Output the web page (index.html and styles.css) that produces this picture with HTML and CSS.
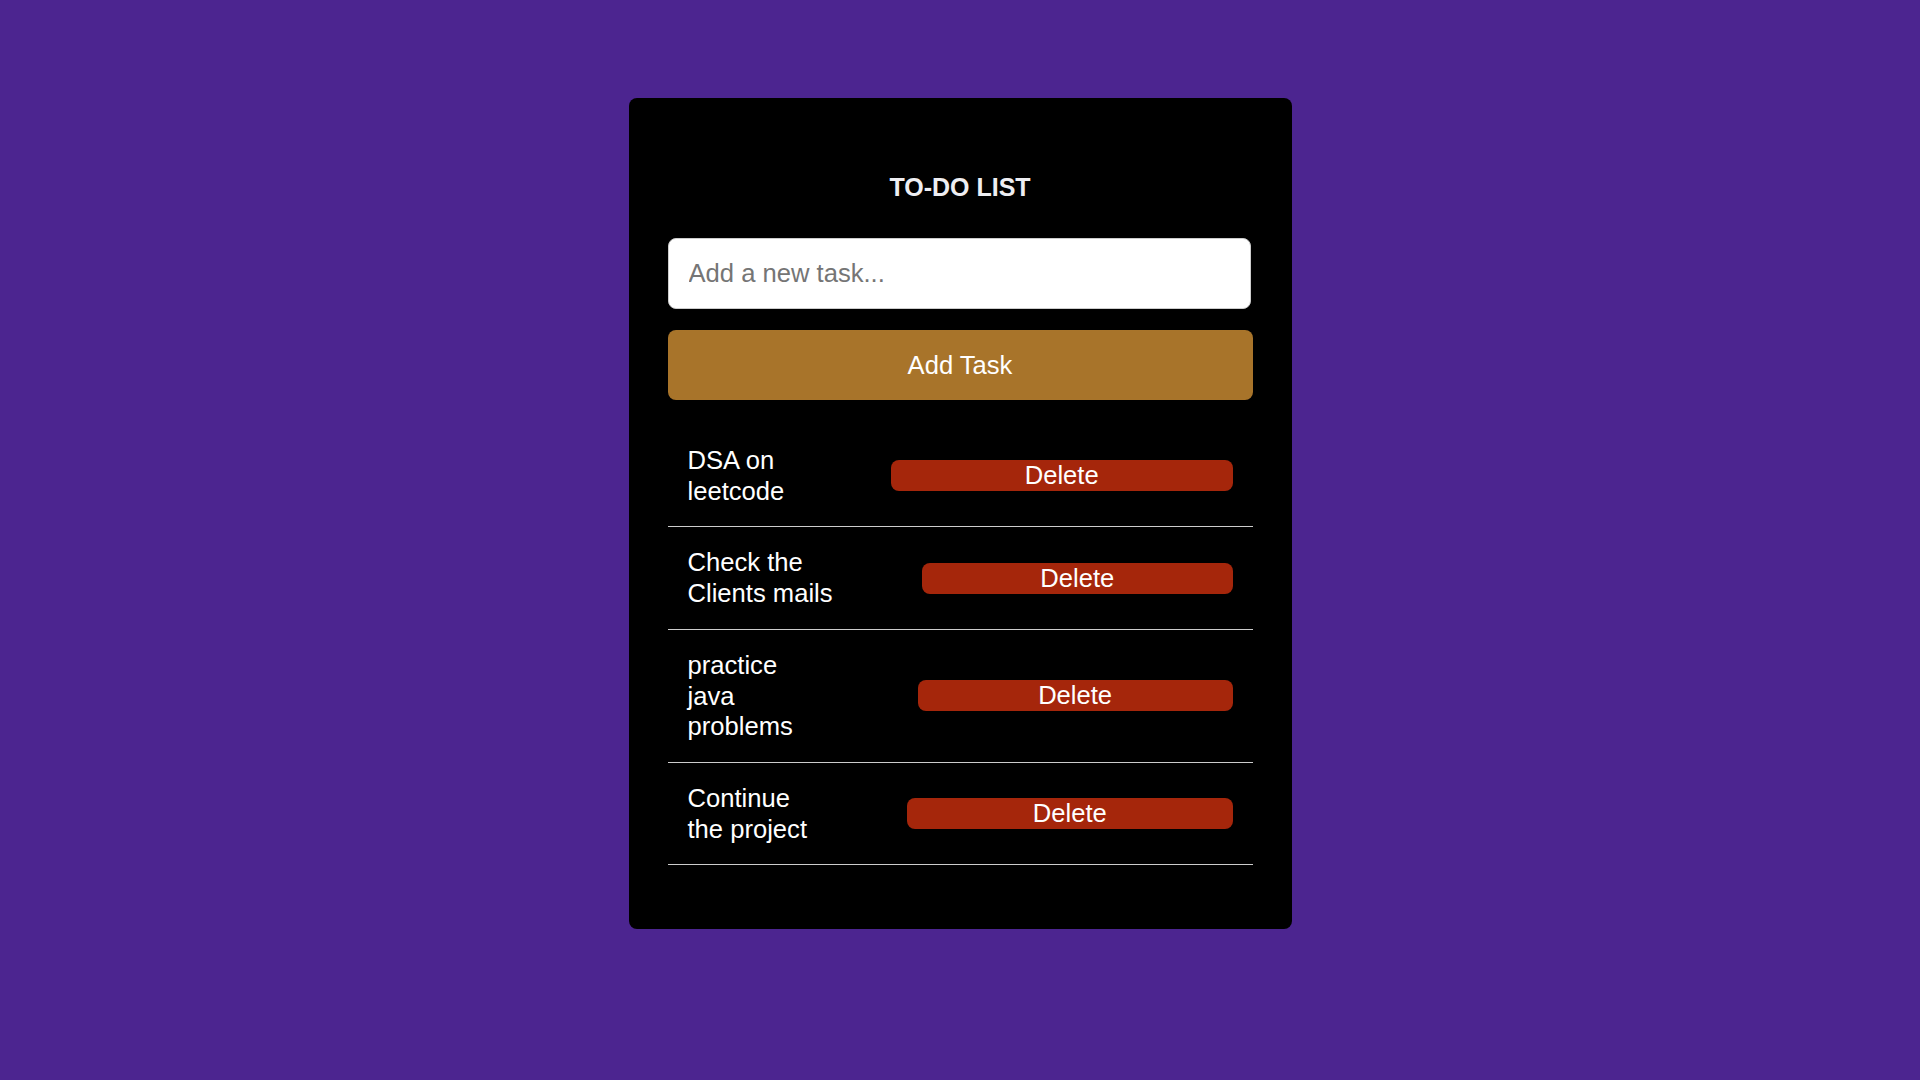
FILE: index.html
```html
<!DOCTYPE html>
<html lang="en">
<head>
<meta charset="utf-8">
<title>To-Do List</title>
<link rel="stylesheet" href="styles.css">
</head>
<body>
  <main class="card">
    <h2 class="title">TO-DO LIST</h2>
    <input class="task-input" type="text" placeholder="Add a new task...">
    <button class="add-btn">Add Task</button>
    <ul class="task-list">
      <li class="task"><span class="task-text">DSA on leetcode</span><button class="del-btn">Delete</button></li>
      <li class="task"><span class="task-text">Check the Clients mails</span><button class="del-btn">Delete</button></li>
      <li class="task"><span class="task-text">practice java problems</span><button class="del-btn">Delete</button></li>
      <li class="task"><span class="task-text">Continue the project</span><button class="del-btn">Delete</button></li>
    </ul>
  </main>
</body>
</html>
```
FILE: styles.css
```css
html, body {
  margin: 0;
  padding: 0;
}

body {
  background: #4c2590;
  font-family: "Liberation Sans", Arial, sans-serif;
  font-size: 16px;
  min-height: 1080px;
}

.card {
  display: block;
  box-sizing: border-box;
  width: 663px;
  margin: 98px auto 0;
  padding: 40px 39px;
  background: #000;
  border-radius: 8px;
}

.title {
  margin: 35px 0 36px;
  font-size: 25px;
  font-weight: bold;
  text-align: center;
  color: #eeeef2;
}

.task-input {
  display: block;
  box-sizing: border-box;
  width: calc(100% - 2px);
  margin: 0;
  padding: 20px;
  border: 1px solid #ccc;
  border-radius: 8px;
  background: #fff;
  font-family: "Liberation Sans", Arial, sans-serif;
  font-size: 25.6px;
  color: #222;
  outline: none;
}

.task-input::placeholder {
  color: #757575;
}

.add-btn {
  display: block;
  box-sizing: border-box;
  width: 100%;
  margin: 21px 0 0;
  padding: 20.5px 20px;
  border: none;
  border-radius: 8px;
  background: #a8742a;
  color: #fff;
  font-family: "Liberation Sans", Arial, sans-serif;
  font-size: 25.6px;
  line-height: normal;
}

.task-list {
  list-style: none;
  margin: 25px 0 24px;
  padding: 0;
  font-size: 25.6px;
  color: #fff;
}

.task {
  display: flex;
  align-items: center;
  padding: 20px;
  border-bottom: 1px solid #ccc;
  line-height: 1.2;
}

.task-text {
  display: block;
}

.del-btn {
  box-sizing: content-box;
  width: 100%;
  margin-left: 88px;
  padding: 1px 6px;
  border: none;
  border-radius: 8px;
  background: #a5260b;
  color: #fff;
  font-family: "Liberation Sans", Arial, sans-serif;
  font-size: 25.6px;
  line-height: normal;
}
```
